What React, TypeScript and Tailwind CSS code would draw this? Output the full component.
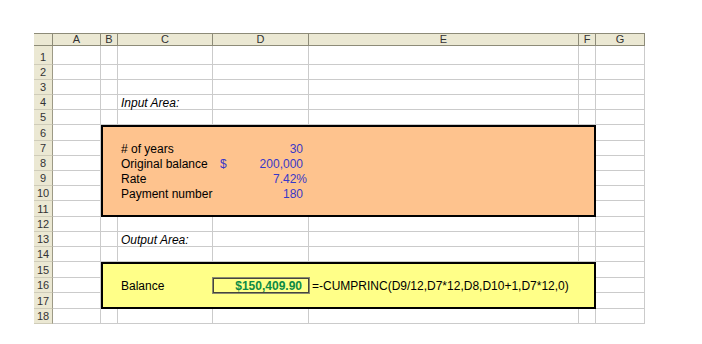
import React from "react";

const COLS = ["A", "B", "C", "D", "E", "F", "G"];
const ROWS = Array.from({ length: 18 }, (_, i) => i + 1);

const GRID =
  "grid grid-cols-[19px_48px_17px_95px_96px_270px_17px_49px] grid-rows-[13px_19px_15px_15px_15px_15px_16px_15px_15px_15px_15px_16px_15px_15px_15px_16px_15px_16px_15px]";

function Cells() {
  const items: React.ReactNode[] = [];
  items.push(
    <div
      key="corner"
      className="border-t border-b border-r border-[#8d8b78] bg-[#ebe8d3]"
    />
  );
  COLS.forEach((c) => {
    items.push(
      <div
        key={"h" + c}
        className="flex items-center justify-center border-t border-b border-r border-[#8d8b78] bg-[#ebe8d3] text-[11px] leading-none text-[#333]"
      >
        {c}
      </div>
    );
  });
  ROWS.forEach((r) => {
    items.push(
      <div
        key={"r" + r}
        className="flex items-end justify-center border-b border-r border-b-[#cfccb9] border-r-[#9d9a86] bg-[#ebe8d3] text-[11px] leading-[13px] text-[#333]"
      >
        {r}
      </div>
    );
    COLS.forEach((c) => {
      items.push(
        <div key={c + r} className="border-b border-r border-[#cbcbcb]" />
      );
    });
  });
  return <div className={`${GRID} col-[1] row-[1]`}>{items}</div>;
}

function Overlay() {
  const label = "flex items-center whitespace-nowrap pl-[3px] text-[12px] text-black";
  const value = "flex items-center justify-end whitespace-nowrap text-[12px] text-[#3838c8]";
  return (
    <div className={`${GRID} col-[1] row-[1]`}>
      <div className="col-[3/8] row-[7/13] border-2 border-black bg-[#fec38e]" />
      <div className="col-[3/8] row-[16/19] border-2 border-black bg-[#ffff88]" />

      <div className={`col-[4] row-[5] italic ${label}`}>Input Area:</div>
      <div className={`col-[4] row-[14] italic ${label}`}>Output Area:</div>

      <div className={`col-[4] row-[8] ${label}`}># of years</div>
      <div className={`col-[4] row-[9] ${label}`}>Original balance</div>
      <div className={`col-[4] row-[10] ${label}`}>Rate</div>
      <div className={`col-[4] row-[11] ${label}`}>Payment number</div>

      <div className={`col-[5] row-[8] pr-[6px] ${value}`}>30</div>
      <div className="col-[5] row-[9] flex items-center justify-between whitespace-nowrap pl-[7px] pr-[6px] text-[12px] text-[#3838c8]">
        <span>$</span>
        <span>200,000</span>
      </div>
      <div className={`col-[5] row-[10] pr-[2px] ${value}`}>7.42%</div>
      <div className={`col-[5] row-[11] pr-[6px] ${value}`}>180</div>

      <div className={`col-[4] row-[17] ${label}`}>Balance</div>
      <div className="col-[5] row-[17] flex items-center justify-end overflow-hidden whitespace-nowrap border border-[#45453a] pr-[6px] text-[12px] font-bold leading-none text-[#0d8a45] outline outline-1 outline-[#8a8a70]">
        $150,409.90
      </div>
      <div className={`col-[6/9] row-[17] ${label}`}>
        =-CUMPRINC(D9/12,D7*12,D8,D10+1,D7*12,0)
      </div>
    </div>
  );
}

export default function App() {
  return (
    <div className="h-[344px] w-[702px] bg-white pl-[34px] pt-[33px] font-['Liberation_Sans',Arial,sans-serif]">
      <div className="grid w-fit grid-cols-1 grid-rows-1">
        <Cells />
        <Overlay />
      </div>
    </div>
  );
}
